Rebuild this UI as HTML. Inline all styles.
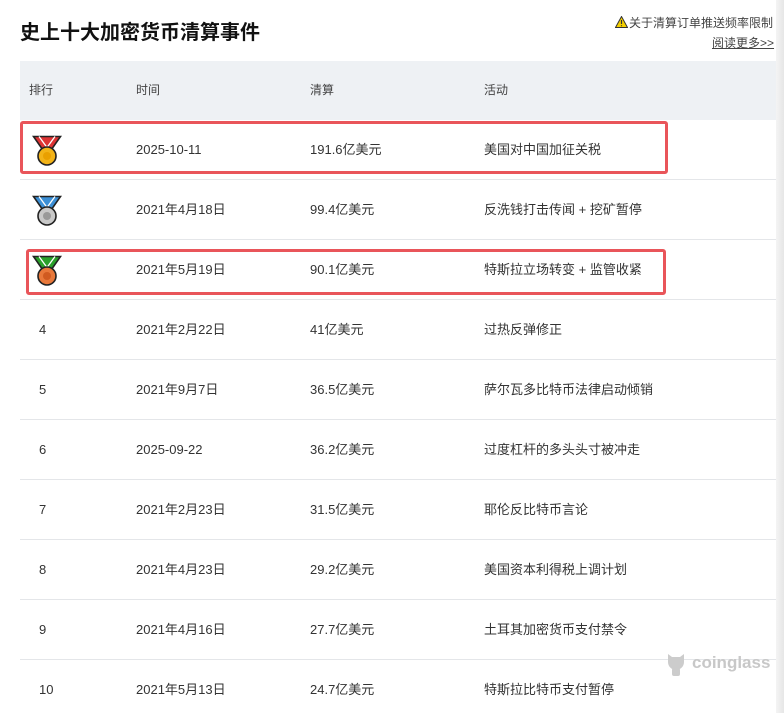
<!DOCTYPE html>
<html><head><meta charset="utf-8"><style>
*{margin:0;padding:0;box-sizing:border-box}
body{width:784px;height:713px;background:#fff;font-family:"Liberation Sans","Noto Sans CJK SC",sans-serif;color:#333;position:relative;overflow:hidden}
.abs{position:absolute}
.t{font-size:13px;white-space:nowrap;line-height:16px}
.title{left:20px;top:16px;font-size:20px;font-weight:bold;color:#111}
.hd{left:20px;top:61px;width:756px;height:59px;background:#eef1f4}
.row{left:20px;width:756px;height:60px;border-bottom:1px solid #e4e6e9}
.box{border:3px solid #e9555a;border-radius:3px}
.shadow{left:776px;top:0;width:8px;height:713px;background:linear-gradient(90deg,#f4f4f4,#e6e6e6)}
</style></head><body>
<div class="abs shadow"></div>
<div class="abs title">史上十大加密货币清算事件</div>
<svg class="abs" style="left:615px;top:16px" width="13" height="12" viewBox="0 0 13 12"><path d="M6.5 0.5L12.5 11.5H0.5z" fill="#f5d000" stroke="#333" stroke-width="1"/><path d="M6.5 4v4M6.5 9.2v1" stroke="#333" stroke-width="1.2"/></svg>
<div class="abs t" style="left:629px;top:15px;font-size:12px;color:#444">关于清算订单推送频率限制</div>
<div class="abs t" style="left:712px;top:35px;font-size:12px;color:#444;text-decoration:underline">阅读更多&gt;&gt;</div>
<div class="abs hd"></div>
<div class="abs t" style="left:29px;top:82px;font-size:12px;color:#444">排行</div>
<div class="abs t" style="left:136px;top:82px;font-size:12px;color:#444">时间</div>
<div class="abs t" style="left:310px;top:82px;font-size:12px;color:#444">清算</div>
<div class="abs t" style="left:484px;top:82px;font-size:12px;color:#444">活动</div>

<div class="abs row" style="top:120px"></div>
<div class="abs row" style="top:180px"></div>
<div class="abs row" style="top:240px"></div>
<div class="abs row" style="top:300px"></div>
<div class="abs row" style="top:360px"></div>
<div class="abs row" style="top:420px"></div>
<div class="abs row" style="top:480px"></div>
<div class="abs row" style="top:540px"></div>
<div class="abs row" style="top:600px"></div>
<div class="abs row" style="top:660px;border:none"></div>

<div class="abs box" style="left:20px;top:121px;width:648px;height:53px"></div>
<div class="abs box" style="left:26px;top:249px;width:640px;height:46px"></div>

<svg class="abs" style="left:32px;top:135px" width="30" height="32" viewBox="0 0 30 32"><path d="M1.5 1.5h27l-9 13h-9z" fill="#d33" stroke="#222" stroke-width="1.6"/><path d="M7 1.5l8 11 8-11" fill="none" stroke="#fff" stroke-width="1.3"/><circle cx="15" cy="21" r="9" fill="#f2b318" stroke="#222" stroke-width="1.6"/><circle cx="15" cy="21" r="4" fill="#e9a000"/></svg>
<svg class="abs" style="left:32px;top:195px" width="30" height="32" viewBox="0 0 30 32"><path d="M1.5 1.5h27l-9 13h-9z" fill="#3b8fd6" stroke="#222" stroke-width="1.6"/><path d="M7 1.5l8 11 8-11" fill="none" stroke="#fff" stroke-width="1.3"/><circle cx="15" cy="21" r="9" fill="#c8c8c8" stroke="#222" stroke-width="1.6"/><circle cx="15" cy="21" r="4" fill="#999"/></svg>
<svg class="abs" style="left:32px;top:255px" width="30" height="32" viewBox="0 0 30 32"><path d="M1.5 1.5h27l-9 13h-9z" fill="#2aa02a" stroke="#222" stroke-width="1.6"/><path d="M7 1.5l8 11 8-11" fill="none" stroke="#fff" stroke-width="1.3"/><circle cx="15" cy="21" r="9" fill="#e8783a" stroke="#222" stroke-width="1.6"/><circle cx="15" cy="21" r="4" fill="#d05a20"/></svg>

<div class="abs t" style="left:136px;top:142px">2025-10-11</div><div class="abs t" style="left:310px;top:142px">191.6亿美元</div><div class="abs t" style="left:484px;top:142px">美国对中国加征关税</div>
<div class="abs t" style="left:136px;top:202px">2021年4月18日</div><div class="abs t" style="left:310px;top:202px">99.4亿美元</div><div class="abs t" style="left:484px;top:202px">反洗钱打击传闻 + 挖矿暂停</div>
<div class="abs t" style="left:136px;top:262px">2021年5月19日</div><div class="abs t" style="left:310px;top:262px">90.1亿美元</div><div class="abs t" style="left:484px;top:262px">特斯拉立场转变 + 监管收紧</div>
<div class="abs t" style="left:39px;top:322px">4</div><div class="abs t" style="left:136px;top:322px">2021年2月22日</div><div class="abs t" style="left:310px;top:322px">41亿美元</div><div class="abs t" style="left:484px;top:322px">过热反弹修正</div>
<div class="abs t" style="left:39px;top:382px">5</div><div class="abs t" style="left:136px;top:382px">2021年9月7日</div><div class="abs t" style="left:310px;top:382px">36.5亿美元</div><div class="abs t" style="left:484px;top:382px">萨尔瓦多比特币法律启动倾销</div>
<div class="abs t" style="left:39px;top:442px">6</div><div class="abs t" style="left:136px;top:442px">2025-09-22</div><div class="abs t" style="left:310px;top:442px">36.2亿美元</div><div class="abs t" style="left:484px;top:442px">过度杠杆的多头头寸被冲走</div>
<div class="abs t" style="left:39px;top:502px">7</div><div class="abs t" style="left:136px;top:502px">2021年2月23日</div><div class="abs t" style="left:310px;top:502px">31.5亿美元</div><div class="abs t" style="left:484px;top:502px">耶伦反比特币言论</div>
<div class="abs t" style="left:39px;top:562px">8</div><div class="abs t" style="left:136px;top:562px">2021年4月23日</div><div class="abs t" style="left:310px;top:562px">29.2亿美元</div><div class="abs t" style="left:484px;top:562px">美国资本利得税上调计划</div>
<div class="abs t" style="left:39px;top:622px">9</div><div class="abs t" style="left:136px;top:622px">2021年4月16日</div><div class="abs t" style="left:310px;top:622px">27.7亿美元</div><div class="abs t" style="left:484px;top:622px">土耳其加密货币支付禁令</div>
<div class="abs t" style="left:39px;top:682px">10</div><div class="abs t" style="left:136px;top:682px">2021年5月13日</div><div class="abs t" style="left:310px;top:682px">24.7亿美元</div><div class="abs t" style="left:484px;top:682px">特斯拉比特币支付暂停</div>

<svg class="abs" style="left:665px;top:651px" width="22" height="26" viewBox="0 0 22 26"><path d="M3 3l4 3h8l4-3v8a8 8 0 0 1-16 0z" fill="#ccc"/><rect x="7" y="17" width="8" height="8" rx="2" fill="#ccc"/></svg>
<div class="abs" style="left:692px;top:653px;font-size:17px;font-weight:bold;color:#c8c8c8">coinglass</div>
</body></html>
